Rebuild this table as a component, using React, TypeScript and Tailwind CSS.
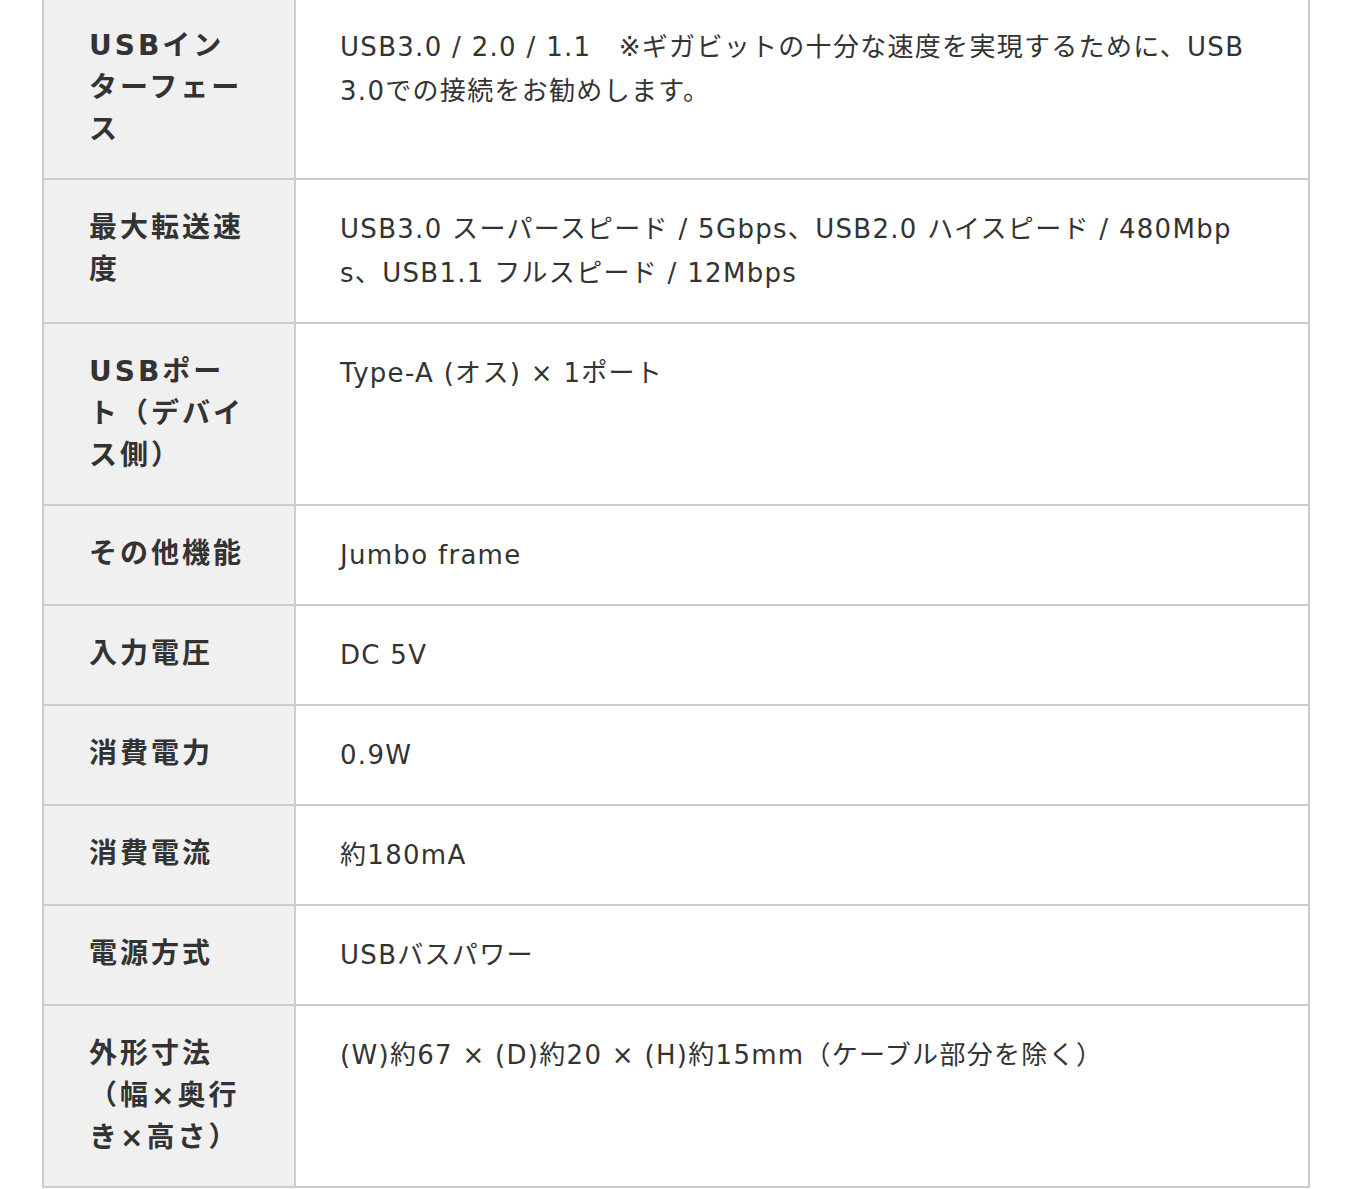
import React from 'react';

type Spec = { label: string[]; value: string[] };

const specs: Spec[] = [
  {
    label: ['USBイン', 'ターフェー', 'ス'],
    value: ['USB3.0 / 2.0 / 1.1　※ギガビットの十分な速度を実現するために、USB', '3.0での接続をお勧めします。'],
  },
  {
    label: ['最大転送速', '度'],
    value: ['USB3.0 スーパースピード / 5Gbps、USB2.0 ハイスピード / 480Mbp', 's、USB1.1 フルスピード / 12Mbps'],
  },
  { label: ['USBポー', 'ト（デバイ', 'ス側）'], value: ['Type-A (オス) × 1ポート'] },
  { label: ['その他機能'], value: ['Jumbo frame'] },
  { label: ['入力電圧'], value: ['DC 5V'] },
  { label: ['消費電力'], value: ['0.9W'] },
  { label: ['消費電流'], value: ['約180mA'] },
  { label: ['電源方式'], value: ['USBバスパワー'] },
  {
    label: ['外形寸法', '（幅×奥行', 'き×高さ）'],
    value: ['(W)約67 × (D)約20 × (H)約15mm（ケーブル部分を除く）'],
  },
];

function App() {
  return (
    <div
      className="min-h-screen bg-white text-[#333333]"
      style={{ fontFamily: '"DejaVu Sans", "Noto Sans CJK JP", sans-serif' }}
    >
      <div className="ml-[42px] mt-[-4px] w-[1268px] border-2 border-[#cccccc]">
        {specs.map((row, i) => (
          <div key={i} className={`flex ${i > 0 ? 'border-t-2 border-[#cccccc]' : ''}`}>
            <div className="w-[252px] shrink-0 border-r-2 border-[#cccccc] bg-[#f0f0f0] py-[27px] pl-[45px] pr-[10px] text-[28px] font-bold leading-[42px] tracking-[3px] whitespace-nowrap">
              {row.label.map((l, j) => (
                <div key={j}>{l}</div>
              ))}
            </div>
            <div className="flex-1 py-[27px] px-[44px] text-[26px] leading-[44px] tracking-[1.3px] whitespace-nowrap">
              {row.value.map((v, j) => (
                <div key={j}>{v}</div>
              ))}
            </div>
          </div>
        ))}
      </div>
    </div>
  );
}

export default App;
